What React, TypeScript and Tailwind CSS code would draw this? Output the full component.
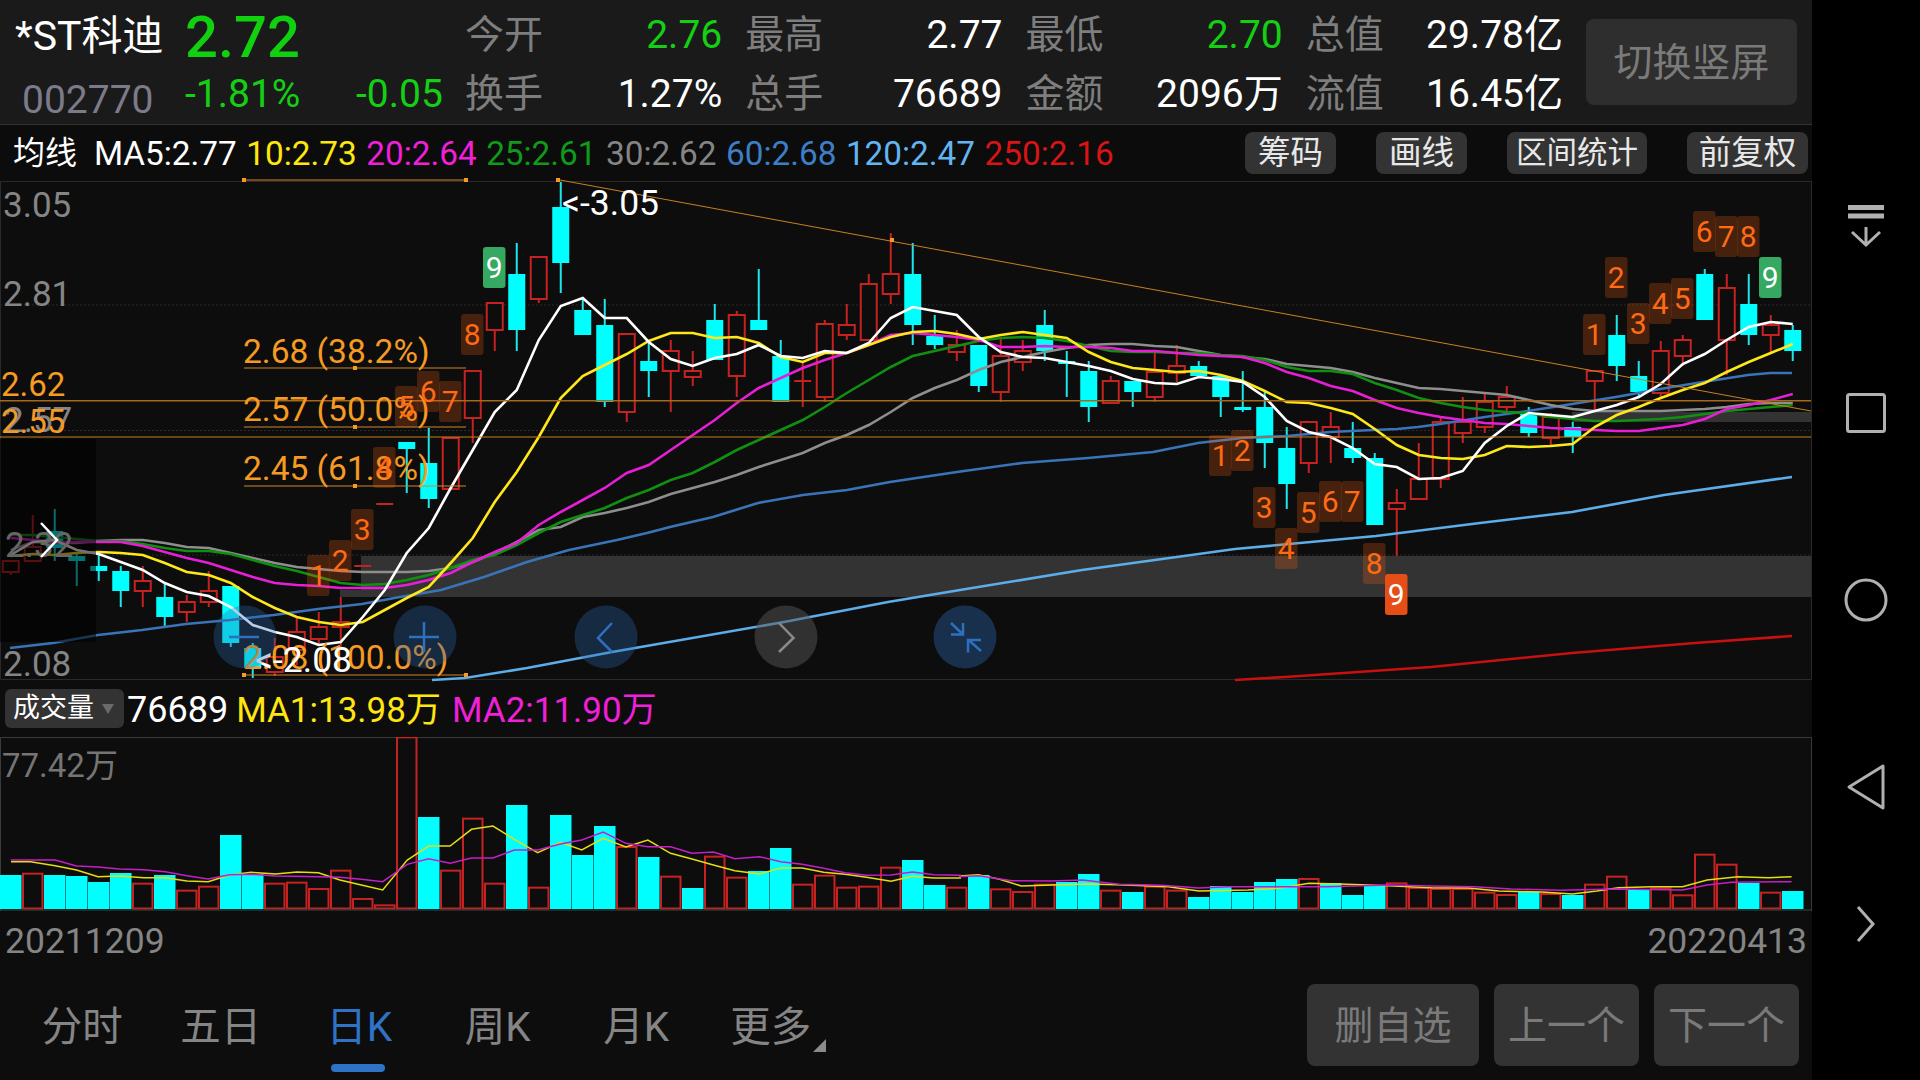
import { Fragment } from 'react';

// page coordinates are used inside the charts: x = 22 * i + 10.75 for candle i
const cx = (i: number) => 22 * i + 10.75;

type Candle = [string, number, number, number, number];

const CANDLES: Candle[] = [
  ['r', 561, 561, 572, 575], ['r', 515, 547, 561, 561], ['c', 509, 531, 548, 561], ['c', 552, 556, 561, 586],
  ['c', 555, 566, 571, 581], ['c', 566, 571, 591, 607], ['r', 566, 581, 591, 607], ['c', 582, 597, 617, 627],
  ['r', 595, 602, 612, 622], ['r', 571, 591, 602, 607], ['c', 586, 586, 643, 647], ['c', 643, 648, 668, 678],
  ['r', 638, 657, 672, 676], ['r', 617, 632, 650, 665], ['r', 612, 627, 639, 645], ['r', 597, 622, 627, 647],
  ['r', 566, 566, 566, 566], ['r', 504, 504, 504, 504], ['c', 442, 442, 449, 493], ['c', 428, 463, 499, 508],
  ['r', 438, 438, 489, 489], ['r', 371, 371, 418, 443], ['r', 303, 303, 330, 351], ['c', 243, 274, 330, 351],
  ['r', 257, 257, 299, 303], ['c', 182, 207, 263, 293], ['c', 299, 310, 335, 335], ['c', 299, 325, 402, 407],
  ['r', 334, 334, 412, 422], ['c', 340, 361, 371, 397], ['r', 340, 351, 371, 412], ['r', 351, 371, 377, 386],
  ['c', 304, 320, 360, 360], ['r', 311, 315, 376, 397], ['c', 269, 320, 330, 330], ['c', 340, 356, 402, 402],
  ['r', 362, 381, 381, 407], ['r', 320, 324, 397, 402], ['r', 304, 325, 335, 340], ['r', 274, 284, 340, 340],
  ['r', 233, 274, 294, 304], ['c', 243, 274, 325, 345], ['c', 315, 336, 345, 349], ['r', 330, 345, 352, 361],
  ['c', 345, 345, 386, 392], ['r', 338, 356, 392, 402], ['r', 340, 351, 362, 371], ['c', 310, 325, 351, 361],
  ['c', 351, 361, 361, 397], ['c', 361, 371, 407, 422], ['r', 376, 381, 403, 403], ['c', 381, 381, 392, 407],
  ['r', 353, 372, 397, 402], ['r', 345, 366, 373, 382], ['c', 361, 366, 376, 376], ['c', 376, 376, 397, 417],
  ['c', 371, 407, 407, 412], ['c', 392, 407, 443, 468], ['c', 427, 448, 484, 509], ['r', 422, 422, 463, 473],
  ['r', 412, 427, 437, 463], ['c', 422, 448, 458, 463], ['c', 453, 458, 525, 525], ['r', 489, 503, 509, 556],
  ['r', 443, 479, 499, 499], ['r', 417, 422, 479, 488], ['r', 397, 422, 433, 443], ['r', 394, 402, 427, 433],
  ['r', 386, 397, 407, 411], ['c', 407, 413, 433, 437], ['r', 413, 417, 438, 446], ['c', 422, 427, 437, 453],
  ['r', 371, 371, 381, 410], ['c', 315, 335, 366, 381], ['c', 361, 376, 392, 396], ['r', 341, 351, 393, 397],
  ['r', 335, 340, 356, 366], ['c', 269, 274, 320, 320], ['r', 274, 288, 340, 375], ['c', 274, 304, 335, 345],
  ['r', 315, 325, 335, 352], ['c', 325, 330, 351, 361],
];

const MA5 = [555, 542, 540, 550, 554, 562, 570, 583, 592, 596, 607, 625, 632, 637, 645, 642, 617, 590, 553, 528, 488, 450, 412, 390, 340, 306, 298, 318, 318, 342, 359, 366, 358, 354, 345, 356, 358, 351, 353, 343, 318, 307, 311, 315, 337, 352, 357, 358, 362, 366, 371, 379, 383, 384, 377, 379, 382, 397, 421, 432, 437, 448, 464, 467, 479, 478, 471, 443, 426, 413, 415, 417, 411, 405, 397, 384, 364, 354, 340, 327, 322, 324];
const MA10 = [556, 554, 555, 553, 552, 553, 555, 563, 572, 575, 583, 597, 608, 617, 622, 625, 622, 610, 598, 587, 563, 538, 502, 472, 437, 398, 376, 365, 354, 341, 333, 333, 338, 337, 343, 357, 362, 353, 353, 345, 337, 332, 331, 334, 339, 335, 332, 335, 338, 352, 362, 368, 370, 372, 371, 375, 381, 391, 402, 403, 408, 414, 429, 445, 455, 458, 459, 455, 446, 447, 446, 444, 427, 415, 407, 398, 390, 383, 372, 362, 353, 344];
const MA20 = [538, 540, 542, 542, 542, 542, 546, 552, 558, 563, 570, 577, 583, 585, 586, 588, 588, 588, 585, 580, 573, 562, 552, 543, 525, 512, 500, 488, 473, 465, 450, 435, 420, 403, 388, 378, 368, 360, 353, 345, 335, 333, 335, 337, 340, 347, 347, 346, 347, 347, 348, 351, 351, 353, 355, 356, 357, 363, 372, 378, 386, 391, 400, 408, 413, 417, 420, 423, 424, 426, 428, 429, 430, 431, 431, 428, 425, 419, 409, 405, 400, 394];
const MA25 = [535, 535, 537, 539, 541, 541, 544, 548, 551, 551, 554, 560, 566, 571, 577, 583, 585, 584, 580, 575, 568, 560, 555, 545, 533, 522, 515, 508, 498, 490, 480, 473, 462, 450, 440, 430, 420, 407, 393, 380, 367, 356, 351, 346, 341, 338, 337, 338, 341, 346, 351, 352, 352, 353, 353, 355, 356, 360, 367, 371, 371, 374, 383, 390, 398, 403, 407, 410, 412, 413, 417, 419, 421, 421, 420, 419, 417, 414, 411, 409, 407, 405];
const MA30 = [550, 542, 543, 543, 541, 540, 540, 543, 547, 548, 553, 558, 563, 567, 569, 571, 572, 572, 572, 571, 568, 562, 553, 542, 530, 527, 517, 513, 508, 502, 494, 488, 482, 475, 467, 460, 453, 443, 435, 425, 412, 398, 388, 380, 370, 362, 357, 352, 348, 345, 344, 344, 346, 347, 351, 355, 357, 359, 364, 366, 368, 372, 378, 383, 388, 389, 391, 393, 395, 400, 405, 409, 411, 411, 411, 411, 410, 409, 407, 404, 403, 403];
const MA60 = '10,648 53,643 98,635 142,630 186,624 230,620 274,615 318,609 362,604 400,597 441,590 484,577 527,562 569,550 617,540 647,533 670,527 713,517 758,503 803,495 847,490 890,482 957,472 1022,463 1088,458 1153,452 1198,443 1242,438 1287,436 1330,432 1373,430 1397,429 1418,427 1440,424 1485,417 1528,411 1572,404 1616,397 1660,389 1703,382 1748,375 1770,373 1792,373';
const MA120 = '432,680 465,678 527,668 612,652 784,622 888,602 960,590 1082,570 1235,549 1376,536 1480,523 1572,512 1664,495 1792,477';
const MA250 = '1235,680 1285,677 1431,667 1572,653 1695,643 1792,636';

// volume bars, one letter per bar (c = down, r = up), tops as read off the crop
const VOL_COLORS = 'crccccrcrrccrrrrrrrcrrrcrcccrcrcrrccrrrrrccrcrrrccrcrrcccccrcccrrrrrrcrcrrcrrrrcrc';
const VOL_TOP = [465, 461, 465, 468, 486, 459, 491, 465, 512, 500, 345, 462, 491, 488, 507, 452, 537, 556, 52, 291, 452, 296, 491, 255, 503, 285, 405, 318, 381, 411, 470, 504, 410, 473, 453, 384, 494, 467, 503, 500, 443, 420, 495, 503, 465, 508, 516, 494, 486, 462, 512, 516, 500, 512, 531, 498, 516, 486, 477, 477, 489, 525, 498, 490, 504, 507, 507, 518, 525, 516, 522, 525, 494, 470, 510, 505, 526, 404, 434, 489, 518, 513];

const VMA1: [number, number][] = [[18, 425], [50, 425], [90, 437], [125, 450], [160, 470], [195, 468], [235, 473], [270, 473], [305, 483], [340, 485], [375, 465], [410, 457], [450, 462], [485, 456], [520, 458], [555, 480], [590, 495], [625, 510], [665, 420], [700, 378], [735, 378], [770, 328], [805, 318], [840, 358], [878, 398], [915, 367], [950, 390], [985, 355], [1022, 381], [1058, 360], [1095, 400], [1130, 417], [1165, 435], [1200, 452], [1240, 462], [1275, 444], [1310, 444], [1345, 457], [1380, 463], [1415, 472], [1455, 484], [1490, 469], [1525, 474], [1568, 474]];
const VMA1B: [number, number][] = [[0, 468], [30, 464], [65, 478], [100, 498], [150, 495], [210, 492], [270, 495], [340, 500], [390, 513], [470, 510], [520, 505], [570, 490], [620, 492], [700, 497], [770, 503], [830, 504], [880, 513], [950, 516], [1000, 522], [1040, 513], [1075, 503], [1130, 500], [1180, 500], [1220, 480], [1270, 470], [1320, 473], [1358, 470]];
const VMA2: [number, number][] = [[18, 420], [90, 420], [125, 438], [160, 441], [195, 447], [235, 449], [270, 455], [305, 467], [340, 477], [375, 464], [410, 463], [450, 468], [520, 470], [555, 472], [590, 478], [625, 485], [665, 433], [700, 416], [735, 430], [770, 414], [805, 414], [840, 390], [878, 390], [915, 372], [950, 360], [985, 336], [1022, 370], [1058, 380], [1095, 380], [1130, 400], [1165, 396], [1200, 416], [1240, 410], [1275, 425], [1310, 433], [1345, 445], [1380, 458], [1415, 466], [1455, 465], [1490, 456], [1525, 464], [1568, 466]];
const VMA2B: [number, number][] = [[0, 470], [30, 467], [85, 482], [150, 483], [200, 480], [260, 493], [330, 496], [390, 504], [440, 500], [600, 500], [700, 495], [770, 498], [840, 500], [900, 507], [980, 511], [1070, 507], [1180, 510], [1220, 495], [1260, 487], [1358, 485]];

const volPts = (a: [number, number][], ox: number) =>
  a.map(([x, y]) => `${ox + x / 1.633},${720 + y / 3}`).join(' ');

// TD sequence boxes: digit, left, top, style
const TD: [string, number, number, string][] = [
  ['1', 307, 555, 'n'], ['2', 329, 540, 'n'], ['3', 351, 509, 'n'], ['4', 373, 447, 'n'], ['5', 395, 386, 'n'],
  ['6', 417, 371, 'n'], ['7', 439, 381, 'n'], ['8', 461, 314, 'n'], ['9', 483, 247, 'g'],
  ['1', 1209, 435, 'n'], ['2', 1231, 430, 'n'], ['3', 1253, 487, 'n'], ['4', 1275, 528, 'n'], ['5', 1297, 492, 'n'],
  ['6', 1319, 481, 'n'], ['7', 1341, 481, 'n'], ['8', 1363, 543, 'n'], ['9', 1385, 574, 'o'],
  ['1', 1583, 314, 'n'], ['2', 1605, 257, 'n'], ['3', 1627, 303, 'n'], ['4', 1649, 283, 'n'], ['5', 1671, 278, 'n'],
  ['6', 1693, 211, 'n'], ['7', 1715, 216, 'n'], ['8', 1737, 216, 'n'], ['9', 1759, 257, 'g'],
];

const MA_LEGEND: [string, string][] = [
  ['MA5:2.77', 'text-white'],
  ['10:2.73', 'text-[#ffe60f]'],
  ['20:2.64', 'text-[#f01fd8]'],
  ['25:2.61', 'text-[#0f9a1a]'],
  ['30:2.62', 'text-[#858585]'],
  ['60:2.68', 'text-[#3d7fc7]'],
  ['120:2.47', 'text-[#62b4f2]'],
  ['250:2.16', 'text-[#d81414]'],
];

const QUOTES: [string, string, string][] = [
  ['今开', '2.76', 'text-[#14cf14]'],
  ['最高', '2.77', 'text-white'],
  ['最低', '2.70', 'text-[#14cf14]'],
  ['总值', '29.78亿', 'text-white'],
  ['换手', '1.27%', 'text-white'],
  ['总手', '76689', 'text-white'],
  ['金额', '2096万', 'text-white'],
  ['流值', '16.45亿', 'text-white'],
];

function MainChart() {
  const ORANGE = '#f59a23';
  return (
    <svg viewBox="0 182 1812 498" className="block h-[498px] w-[1812px] overflow-visible">
      {/* frame and dotted grid */}
      <path d="M0.5 182V679.5H1811.5V182" fill="none" stroke="#2a2a2a" strokeWidth="1" />
      {[305, 430.5, 555].map((y) => (
        <line key={y} x1="0" x2="1811" y1={y} y2={y} stroke="#2b2b2b" strokeDasharray="2 2" />
      ))}
      {/* grey bands */}
      <rect x="361" y="556" width="1450" height="41" fill="#333333" />
      <rect x="340" y="590" width="21" height="7" fill="#333333" />
      <rect x="1572" y="412" width="239" height="10" fill="#333333" />

      {/* candles */}
      {CANDLES.map(([k, h, t, b, l], i) => {
        const x = cx(i);
        const color = k === 'c' ? '#00ffff' : '#c62222';
        return (
          <Fragment key={i}>
            {h < l && <line x1={x} x2={x} y1={h} y2={l} stroke={k === 'c' ? '#1fe6ea' : color} strokeWidth="2" />}
            {k === 'c' ? (
              <rect x={x - 8.5} y={t} width="17" height={Math.max(b - t, 3)} fill={color} />
            ) : b - t < 3 ? (
              <rect x={x - 8.5} y={t - 1} width="17" height="2" fill={color} />
            ) : (
              <rect x={x - 8} y={t} width="16" height={b - t} fill="#0d0d0d" stroke={color} strokeWidth="2" />
            )}
          </Fragment>
        );
      })}

      {/* moving averages */}
      <polyline points={MA250} fill="none" stroke="#c81010" strokeWidth="2.6" />
      <polyline points={MA120} fill="none" stroke="#5cade8" strokeWidth="2.6" />
      <polyline points={MA60} fill="none" stroke="#3a74b8" strokeWidth="2.6" />
      {(
        [
          [MA30, '#8e8e8e'],
          [MA25, '#109010'],
          [MA20, '#e61fd6'],
          [MA10, '#ffe81a'],
          [MA5, '#ffffff'],
        ] as [number[], string][]
      ).map(([ys, c]) => (
        <polyline key={c} points={ys.map((y, i) => `${cx(i)},${y}`).join(' ')} fill="none" stroke={c} strokeWidth="2.6" />
      ))}

      {/* drawn lines */}
      <line x1="0" x2="1811" y1="400.7" y2="400.7" stroke="#a8681a" strokeWidth="1.5" />
      <line x1="0" x2="1811" y1="437" y2="437" stroke="#c8801f" strokeWidth="1" />
      <line x1="560" y1="180" x2="1811" y2="411" stroke="#c8801f" strokeWidth="1" />
      {[180, 368, 427, 486, 675].map((y) => (
        <line key={y} x1="244" x2="466" y1={y} y2={y} stroke="#d4862a" strokeWidth="1" />
      ))}
      {[
        [244, 180], [466, 180], [558, 180], [892, 240], [355, 368], [355, 427], [355, 486], [244, 675], [466, 675],
      ].map(([x, y]) => (
        <rect key={`${x}-${y}`} x={x - 2} y={y - 2} width="4" height="4" fill={ORANGE} />
      ))}

      {/* left dim panel */}
      <rect x="0" y="439" width="96" height="203" fill="#000000" opacity="0.55" />

      {/* price axis */}
      <g fontSize="35" fill="#858585">
        <text x="3" y="217">3.05</text>
        <text x="3" y="306">2.81</text>
        <text x="4" y="432">2.57</text>
        <text x="5" y="557" fill="#666666">2.32</text>
        <text x="3" y="676">2.08</text>
      </g>
      <g fontSize="33" fill={ORANGE}>
        <text x="1" y="396">2.62</text>
        <text x="1" y="433">2.55</text>
      </g>

      {/* fib labels */}
      <g fontSize="33.5" fill={ORANGE}>
        <text x="243" y="363">2.68 (38.2%)</text>
        <text x="243" y="421">2.57 (50.0%)</text>
        <text x="243" y="480">2.45 (61.8%)</text>
        <text x="243" y="669">2.08 (100.0%)</text>
      </g>

      {/* TD sequence */}
      {TD.map(([n, x, y, kind]) => (
        <g key={`${x}-${y}`}>
          <rect
            x={x}
            y={y}
            width="22.5"
            height="41"
            rx="3"
            fill={kind === 'g' ? '#35a862' : kind === 'o' ? '#e64e17' : '#ff6510'}
            opacity={kind === 'n' ? 0.24 : 1}
          />
          <text x={x + 11.25} y={y + 31} textAnchor="middle" fontSize="30" fill={kind === 'n' ? '#ff6a14' : '#ffffff'}>
            {n}
          </text>
        </g>
      ))}

      {/* extremes */}
      <g fontSize="35.5" fill="#ffffff">
        <text x="562" y="215">&lt;-3.05</text>
        <text x="255" y="672">&lt;-2.08</text>
      </g>

      {/* floating zoom controls */}
      <circle cx="245" cy="637" r="31.5" fill="#2a66ad" opacity="0.33" />
      <circle cx="425" cy="637" r="31.5" fill="#2a66ad" opacity="0.33" />
      <circle cx="606" cy="637" r="31.5" fill="#2a66ad" opacity="0.33" />
      <circle cx="786" cy="637" r="31.5" fill="#555555" opacity="0.5" />
      <circle cx="965" cy="637" r="31.5" fill="#2a66ad" opacity="0.4" />
      <g fill="none" stroke="#2f6fc0" strokeWidth="2.5">
        <path d="M229 637H259" />
        <path d="M409 637H439M424 622V652" />
        <path d="M612 623L598 638L612 652" />
        <path d="M951 623L963 634.5M951 634.5H963V623" />
        <path d="M981 651L968.5 640M981 640H968V652.5" />
      </g>
      <path d="M779 623L793.5 638L779 652" fill="none" stroke="#8a8a8a" strokeWidth="2.5" />

      {/* chevron over the dim panel */}
      <path d="M41 523L57 540L41 557" fill="none" stroke="#ffffff" strokeWidth="2.5" />
    </svg>
  );
}

function VolumeChart() {
  return (
    <svg viewBox="0 737 1812 174" className="block h-[174px] w-[1812px]">
      <path d="M0.5 911V737.5H1811.5V911" fill="none" stroke="#3a3a3a" strokeWidth="1" />
      {VOL_TOP.map((top, i) => {
        const x = 22 * i;
        const y = 720 + top / 3;
        return VOL_COLORS[i] === 'c' ? (
          <rect key={i} x={x} y={y} width="21.5" height={909 - y} fill="#00ffff" />
        ) : (
          <rect key={i} x={x + 1} y={y} width="19.5" height={908.5 - y} fill="#0d0d0d" stroke="#c62222" strokeWidth="2" />
        );
      })}
      <line x1="0" x2="1812" y1="910" y2="910" stroke="#2f4a4a" strokeWidth="1" />
      <polyline points={`${volPts(VMA1, 0)} ${volPts(VMA1B, 960)}`} fill="none" stroke="#e6dc12" strokeWidth="1.5" />
      <polyline points={`${volPts(VMA2, 0)} ${volPts(VMA2B, 960)}`} fill="none" stroke="#c41fc8" strokeWidth="1.5" />
      <text x="2" y="777" fontSize="33" fill="#757575">77.42万</text>
    </svg>
  );
}

function NavRail() {
  return (
    <div className="flex h-[1080px] w-[108px] flex-col items-center bg-black pt-[204px] text-[#b0b0b0]">
      <svg width="44" height="44" viewBox="0 0 44 44" fill="none" stroke="currentColor">
        <path d="M4 3.5H40M4 12H40" strokeWidth="5" />
        <path d="M22 23V41M8 28L22 41L36 28" strokeWidth="3" />
      </svg>
      <svg width="44" height="44" viewBox="0 0 44 44" fill="none" stroke="currentColor" className="mt-[143px]">
        <rect x="3.5" y="3.5" width="37" height="37" rx="2" strokeWidth="3" />
      </svg>
      <svg width="44" height="44" viewBox="0 0 44 44" fill="none" stroke="currentColor" className="mt-[143px]">
        <circle cx="22" cy="22" r="20" strokeWidth="3" />
      </svg>
      <svg width="44" height="48" viewBox="0 0 44 48" fill="none" stroke="currentColor" className="mt-[141px]">
        <path d="M39 3L5 24L39 45Z" strokeWidth="3" strokeLinejoin="round" />
      </svg>
      <svg width="24" height="38" viewBox="0 0 24 38" fill="none" stroke="currentColor" className="mt-[94px]">
        <path d="M4 2L19 19L4 36" strokeWidth="3" />
      </svg>
    </div>
  );
}

const TABS = ['分时', '五日', '日K', '周K', '月K', '更多'];

export default function App() {
  return (
    <div className="flex h-[1080px] w-[1920px] overflow-hidden bg-black [font-family:Roboto,'Noto_Sans_CJK_SC',sans-serif]">
      <div className="flex w-[1812px] flex-col bg-[#0d0d0d]">
        {/* quote header */}
        <div className="flex h-[125px] border-b border-[#333] bg-[#1a1a1a]">
          <div className="w-[466px] pl-[15px]">
            <div className="flex h-[63px] items-center pt-[10px]">
              <span className="w-[170px] text-[41px] leading-tight text-white">*ST科迪</span>
              <span className="text-[58px] leading-[64px] font-medium text-[#10d010]">2.72</span>
            </div>
            <div className="flex h-[57px] items-center pt-[6px]">
              <span className="mt-[12px] ml-[7px] w-[163px] text-[39px] leading-none text-[#7b7b8a]">002770</span>
              <span className="w-[171px] text-[39px] leading-none text-[#14cf14]">-1.81%</span>
              <span className="text-[39px] leading-none text-[#14cf14]">-0.05</span>
            </div>
          </div>
          <div className="grid w-[1097px] grid-cols-4 gap-x-[24px] pt-[7px]">
            {QUOTES.map(([label, value, color]) => (
              <div key={label} className="flex h-[57px] items-center justify-between">
                <span className="-ml-[1px] text-[39px] leading-none text-[#7e7e7e]">{label}</span>
                <span className={`text-[39px] leading-none ${color}`}>{value}</span>
              </div>
            ))}
          </div>
          <button className="mt-[19px] ml-[23px] flex h-[86px] w-[211px] items-center justify-center rounded-lg bg-[#2e2e2e] pt-[3px] text-[39px] leading-none text-[#7a7a7a]">
            切换竖屏
          </button>
        </div>

        {/* moving average legend */}
        <div className="flex h-[57px] items-center border-b border-[#2a2a2a] bg-[#0c0c0c]">
          <span className="w-[94px] pl-[13px] text-[32px] leading-none text-white">均线</span>
          <div className="flex w-[1151px] gap-x-[9.5px] pt-[1px]">
            {MA_LEGEND.map(([text, color]) => (
              <span key={text} className={`text-[33.3px] leading-none ${color}`}>
                {text}
              </span>
            ))}
          </div>
          <div className="flex items-center">
            {['筹码', '画线', '区间统计', '前复权'].map((b, i) => (
              <button
                key={b}
                className={`flex h-[42px] items-center justify-center rounded-lg bg-[#333] pt-[1px] leading-none text-[#e8e8e8] ${
                  i === 0
                    ? 'w-[91px] text-[32.5px]'
                    : i === 1
                      ? 'ml-[40px] w-[91px] text-[32.5px]'
                      : i === 2
                        ? 'ml-[40px] w-[140px] text-[30.5px]'
                        : 'ml-[40px] w-[121px] text-[32.5px]'
                }`}
              >
                {b}
              </button>
            ))}
          </div>
        </div>

        <MainChart />

        {/* volume legend */}
        <div className="flex h-[57px] items-center">
          <div className="ml-[5px] flex h-[39px] w-[119px] items-center rounded-md bg-[#333] pl-[8px]">
            <span className="text-[27px] leading-none text-white">成交量</span>
            <span className="ml-[8px] h-0 w-0 border-x-[6px] border-t-[10px] border-x-transparent border-t-[#6a6a6a]" />
          </div>
          <span className="mt-[3px] ml-[3px] text-[36px] leading-none text-white">76689</span>
          <span className="mt-[3px] ml-[8px] text-[35px] leading-none text-[#ffe60f]">MA1:13.98万</span>
          <span className="mt-[3px] ml-[11px] text-[35px] leading-none text-[#f01fd8]">MA2:11.90万</span>
        </div>

        <VolumeChart />

        {/* date range */}
        <div className="flex h-[60px] items-center justify-between pt-[2px] pr-[5px] pl-[5px] text-[35.5px] leading-none text-[#858585]">
          <span>20211209</span>
          <span>20220413</span>
        </div>

        {/* period tabs and actions */}
        <div className="flex flex-1 items-start">
          <div className="flex pl-[13px]">
            {TABS.map((t, i) => (
              <div
                key={t}
                className={`relative flex h-[109px] w-[138.5px] items-center justify-center ${i === 5 ? 'pt-[4px] pr-[8px]' : 'pt-[4px]'}`}
              >
                <span className={`text-[40.5px] leading-none ${t === '日K' ? 'text-[#2e73c5]' : 'text-[#858585]'}`}>{t}</span>
                {t === '日K' && <span className="absolute bottom-[8px] left-[41px] h-[8px] w-[54px] rounded-full bg-[#2e73c5]" />}
                {i === 5 && (
                  <span className="absolute top-[68px] right-[18px] h-0 w-0 border-b-[13px] border-l-[13px] border-b-[#8a8a8a] border-l-transparent" />
                )}
              </div>
            ))}
          </div>
          <div className="mt-[13px] ml-[463px] flex gap-x-[15px] text-[39px] leading-none text-[#7a7a7a]">
            <button className="flex h-[82px] w-[172px] items-center justify-center rounded-lg bg-[#333] pt-[3px]">删自选</button>
            <button className="flex h-[82px] w-[145px] items-center justify-center rounded-lg bg-[#333] pt-[3px]">上一个</button>
            <button className="flex h-[82px] w-[145px] items-center justify-center rounded-lg bg-[#333] pt-[3px]">下一个</button>
          </div>
        </div>
      </div>
      <NavRail />
    </div>
  );
}
